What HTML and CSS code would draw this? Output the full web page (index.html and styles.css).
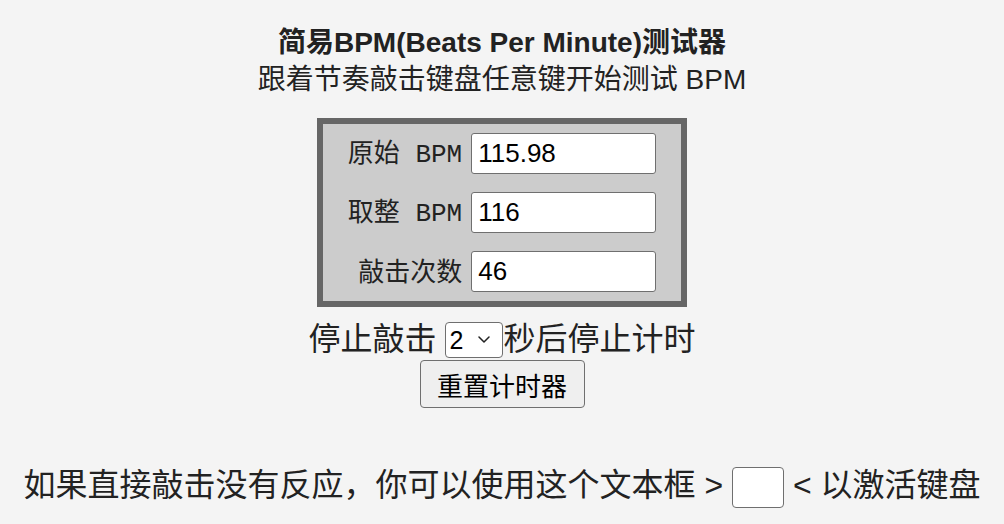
FILE: index.html
```html
<!DOCTYPE html>
<html lang="zh-CN">
<head>
<meta charset="utf-8">
<title>简易BPM测试器</title>
<link rel="stylesheet" href="styles.css">
</head>
<body>
<main class="page">
  <h1 class="title">简易BPM(Beats Per Minute)测试器</h1>
  <p class="subtitle">跟着节奏敲击键盘任意键开始测试 BPM</p>
  <div class="panel">
    <label class="label" for="raw">原始<code class="mono"> BPM</code></label>
    <input class="field" id="raw" type="text" value="115.98">
    <label class="label" for="round">取整<code class="mono"> BPM</code></label>
    <input class="field" id="round" type="text" value="116">
    <label class="label" for="count">敲击次数</label>
    <input class="field" id="count" type="text" value="46">
  </div>
  <div class="stop-row">
    <span class="txt">停止敲击&nbsp;</span>
    <span class="select-wrap">
      <select class="select">
        <option>1</option>
        <option selected>2</option>
        <option>3</option>
        <option>4</option>
        <option>5</option>
      </select>
      <svg class="chev" width="12" height="7" viewBox="0 0 12 7"><path d="M1 1 L6 6 L11 1" fill="none" stroke="#222" stroke-width="1.5" stroke-linecap="round" stroke-linejoin="round"/></svg>
    </span>
    <span class="txt">秒后停止计时</span>
  </div>
  <button class="reset" type="button">重置计时器</button>
  <p class="hint">如果直接敲击没有反应，你可以使用这个文本框 &gt; <input class="mini" type="text"> &lt; 以激活键盘</p>
</main>
</body>
</html>
```
FILE: styles.css
```css
html, body {
  margin: 0;
  padding: 0;
  background: #f4f4f4;
}

body {
  font-family: "Liberation Sans", "Noto Sans CJK SC", sans-serif;
  color: #222;
}

.page {
  display: flex;
  flex-direction: column;
  align-items: center;
}

.title {
  margin: 24px 0 0;
  font-size: 28px;
  line-height: 38px;
  font-weight: bold;
}

.subtitle {
  margin: 0;
  font-size: 28px;
  line-height: 36px;
}

.panel {
  margin-top: 20px;
  box-sizing: border-box;
  width: 370px;
  border: 6px solid #666666;
  background: #cccccc;
  padding: 9px 0;
  display: grid;
  grid-template-columns: auto 185px;
  justify-content: center;
  column-gap: 9px;
  row-gap: 18px;
  font-size: 26px;
}

.label {
  justify-self: end;
  align-self: center;
  line-height: 32px;
  white-space: pre;
}

.mono {
  font-family: "Liberation Mono", monospace;
  font-size: 26px;
}

.field {
  box-sizing: border-box;
  width: 185px;
  height: 41px;
  margin: 0;
  padding: 0 6px;
  border: 1px solid #6f6f6f;
  border-radius: 3px;
  background: #fff;
  font-family: "Liberation Sans", sans-serif;
  font-size: 26px;
  color: #000;
  outline: none;
}

.stop-row {
  margin-top: 11px;
  height: 42px;
  display: flex;
  align-items: center;
  font-size: 32px;
  line-height: 42px;
}

.txt {
  white-space: pre;
}

.select-wrap {
  position: relative;
  display: block;
  width: 58px;
  height: 36px;
  margin-top: 2px;
}

.select {
  -webkit-appearance: none;
  appearance: none;
  display: block;
  box-sizing: border-box;
  width: 58px;
  height: 36px;
  margin: 0;
  padding: 0 0 0 3px;
  border: 1px solid #6f6f6f;
  border-radius: 4px;
  background: #fff;
  font-family: "Liberation Sans", sans-serif;
  font-size: 25px;
  line-height: 34px;
  color: #000;
  outline: none;
}

.chev {
  position: absolute;
  left: 33px;
  top: 14px;
  pointer-events: none;
}

.reset {
  box-sizing: border-box;
  width: 165px;
  height: 48px;
  margin: 0;
  padding: 0;
  border: 1px solid #6f6f6f;
  border-radius: 4px;
  background: #efefef;
  font-family: "Liberation Sans", "Noto Sans CJK SC", sans-serif;
  font-size: 26px;
  color: #000;
}

.hint {
  margin: 53px 0 0;
  font-size: 32px;
  line-height: 48px;
  white-space: nowrap;
}

.mini {
  box-sizing: border-box;
  width: 52px;
  height: 41px;
  margin: 0;
  padding: 0 4px;
  border: 1px solid #6f6f6f;
  border-radius: 4px;
  background: #fff;
  font-size: 26px;
  vertical-align: middle;
  outline: none;
}
```
